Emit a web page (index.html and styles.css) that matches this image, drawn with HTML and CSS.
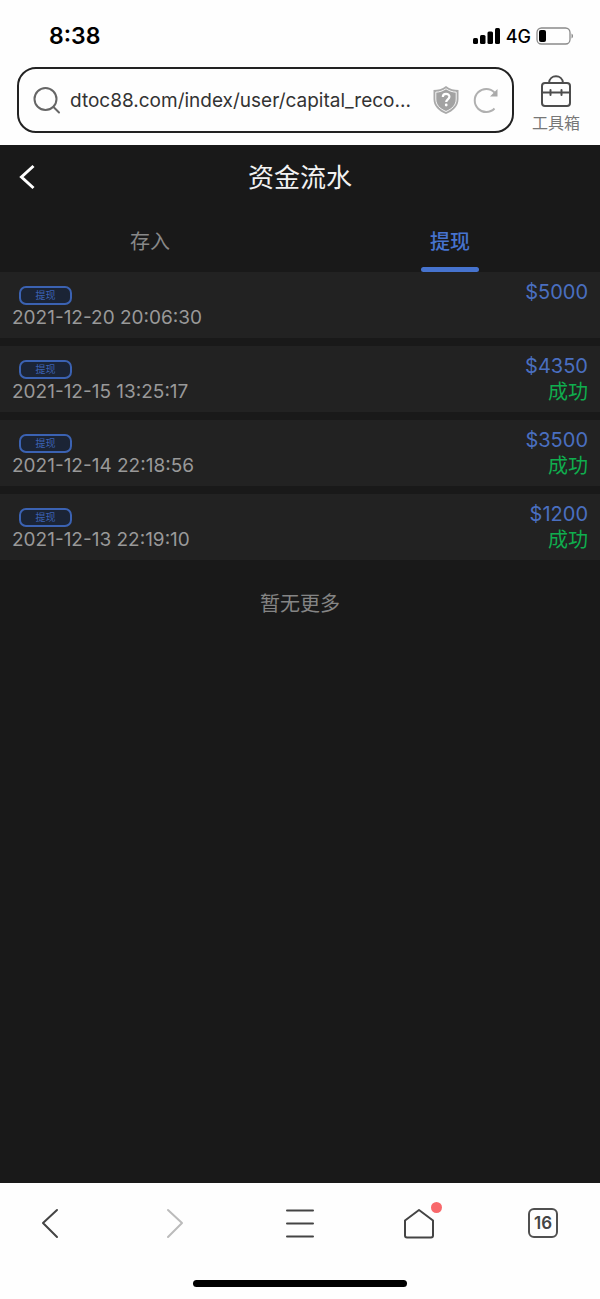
FILE: index.html
```html
<!DOCTYPE html>
<html lang="zh-CN">
<head>
<meta charset="utf-8">
<meta name="viewport" content="width=device-width, initial-scale=1">
<title>资金流水</title>
<link rel="stylesheet" href="styles.css">
</head>
<body>
<header class="browser">
  <div class="status">
    <time class="clock">8:38</time>
    <div class="signal">
      <svg width="28" height="18" viewBox="0 0 28 18" aria-hidden="true"><rect x="0" y="11" width="5" height="6" rx="1.5"/><rect x="7" y="8" width="5.500" height="9" rx="1.500"/><rect x="14.500" y="4.500" width="5.500" height="12.500" rx="1.500"/><rect x="22" y="1" width="5" height="16" rx="1.500"/></svg>
      <span>4G</span>
      <svg width="38" height="20" viewBox="0 0 38 20" fill="none" aria-hidden="true"><rect x="1" y="2" width="33" height="16" rx="4.500" stroke="#8a8a8a" stroke-width="1.300"/><rect x="3" y="4" width="7" height="12" rx="2" fill="#000"/><path d="M35.500 7.500c2 .8 2 4.200 0 5z" fill="#8a8a8a"/></svg>
    </div>
  </div>
  <div class="address-row">
    <form class="address">
      <svg width="28" height="28" viewBox="0 0 28 28" fill="none" stroke="#666" stroke-width="2" stroke-linecap="round" aria-hidden="true"><circle cx="12.500" cy="13" r="11"/><path d="M20.500 21l5.500 5.500"/></svg>
      <input class="url" type="text" aria-label="网址" value="dtoc88.com/index/user/capital_reco...">
      <button class="icon-button" type="button" aria-label="网站安全">
        <svg width="28" height="30" viewBox="0 0 28 30" aria-hidden="true"><path d="M14 1c4 3 8 4 12.500 4v9c0 7-5 12-12.500 15C6.500 26 1.500 21 1.500 14V5C6 5 10 4 14 1z" fill="#aaa"/><path d="M14 3.800c3.500 2.300 6.500 3.200 10.200 3.400V14c0 6-4 9.800-10.200 12.500C7.800 23.800 3.800 20 3.800 14V7.200C7.500 7 10.500 6.100 14 3.800z" fill="#a2a2a2" stroke="#fff" stroke-width=".9"/><path d="M10.800 12c0-4.300 6.600-4.200 6.600-.2 0 2.500-3.200 2.600-3.200 5.200" fill="none" stroke="#fff" stroke-width="2.200"/><circle cx="14.200" cy="20" r="1.400" fill="#fff"/></svg>
      </button>
      <button class="icon-button" type="button" aria-label="刷新">
        <svg width="28" height="28" viewBox="0 0 28 28" fill="none" stroke="#b0b0b0" stroke-width="2" aria-hidden="true"><path d="M22.500 6.500A11.500 11.500 0 1 0 22.500 22.500"/><path d="M25.500 3v7.500h-7.500z" fill="#aaa" stroke="none"/></svg>
      </button>
    </form>
    <button class="toolbox" type="button">
      <svg width="32" height="34" viewBox="0 0 32 34" fill="none" stroke="#4d4d4d" stroke-width="2" stroke-linecap="round" aria-hidden="true"><rect x="2" y="8" width="28" height="23" rx="3"/><path d="M9 8c.5-9 13.500-9 14 0M2 17.500h7M12 17.500h8M23 17.500h7M10.500 15v5M21.500 15v5"/></svg>
      <span>工具箱</span>
    </button>
  </div>
</header>
<main class="page">
  <div class="title-bar">
    <button class="back" type="button" aria-label="返回">
      <svg width="18" height="26" viewBox="0 0 18 26" fill="none" stroke="#fff" stroke-width="3" aria-hidden="true"><path d="M15.500 2L3.500 13l12 11"/></svg>
    </button>
    <h1>资金流水</h1>
  </div>
  <nav class="tabs">
    <button class="tab" type="button">存入</button>
    <button class="tab active" type="button">提现</button>
  </nav>
  <ul class="records">
    <li class="record">
      <div class="info"><span class="tag">提现</span><time>2021-12-20 20:06:30</time></div>
      <div class="result"><span class="amount">$5000</span></div>
    </li>
    <li class="record">
      <div class="info"><span class="tag">提现</span><time>2021-12-15 13:25:17</time></div>
      <div class="result"><span class="amount">$4350</span><span class="success">成功</span></div>
    </li>
    <li class="record">
      <div class="info"><span class="tag">提现</span><time>2021-12-14 22:18:56</time></div>
      <div class="result"><span class="amount">$3500</span><span class="success">成功</span></div>
    </li>
    <li class="record">
      <div class="info"><span class="tag">提现</span><time>2021-12-13 22:19:10</time></div>
      <div class="result"><span class="amount">$1200</span><span class="success">成功</span></div>
    </li>
  </ul>
  <p class="end">暂无更多</p>
</main>
<footer class="bottom">
  <nav class="toolbar">
    <div class="group">
      <button class="tool" type="button" aria-label="后退"><svg width="32" height="32" viewBox="0 0 32 32" aria-hidden="true"><path d="M23 3L9 16l14 14"/></svg></button>
      <button class="tool" type="button" aria-label="前进" disabled><svg width="32" height="32" viewBox="0 0 32 32" aria-hidden="true"><path d="M10 3l14 13-14 14"/></svg></button>
    </div>
    <button class="tool" type="button" aria-label="菜单"><svg width="32" height="32" viewBox="0 0 32 32" aria-hidden="true"><path d="M3 3.500h26M3 16.500h26M3 29.500h26"/></svg></button>
    <div class="group right">
      <button class="tool" type="button" aria-label="主页"><svg width="32" height="32" viewBox="0 0 32 32" aria-hidden="true"><path d="M2 13.500L16 3l14 10.500V28.500q0 2-2 2H4q-2 0-2-2z"/></svg><span class="dot"></span></button>
      <button class="tool" type="button" aria-label="16 个窗口"><span class="count">16</span></button>
    </div>
  </nav>
  <div class="home-indicator"></div>
</footer>
</body>
</html>
```

FILE: styles.css
```css
* { box-sizing: border-box; }
body {
  margin: 0;
  min-height: 100vh;
  display: flex;
  flex-direction: column;
  background: #191919;
  font-family: Inter, "Noto Sans CJK SC", sans-serif;
}
button, input { font: inherit; color: inherit; border: 0; padding: 0; background: none; }
svg { display: block; }

.browser { background: #fefefe; padding: 20px 20px 12px 17px; }
.status {
  display: flex;
  justify-content: space-between;
  align-items: center;
  height: 32px;
  padding: 0 6px 0 32px;
  color: #000;
}
.clock { font-size: 23px; font-weight: 600; }
.signal { display: flex; align-items: center; gap: 5px; font-size: 18px; font-weight: 500; }
.address-row { display: flex; align-items: center; gap: 18px; margin-top: 15px; }
.address {
  flex: 1;
  min-width: 0;
  display: flex;
  align-items: center;
  gap: 12px;
  height: 66px;
  padding: 0 12px 0 14px;
  border: 2px solid #222;
  border-radius: 19px;
}
.url { flex: 1; min-width: 0; margin-left: -3px; font-size: 19px; color: #333; outline: 0; text-overflow: ellipsis; }
.toolbox { display: flex; flex-direction: column; align-items: center; gap: 4px; padding-top: 8px; font-size: 16px; line-height: 20px; color: #777; }

.page { flex: 1; background: #191919; color: #999; }
.title-bar { display: grid; grid-template-columns: 1fr auto 1fr; align-items: center; height: 64px; padding: 0 18px; }
.back { justify-self: start; }
.title-bar h1 { margin: 0; padding-bottom: 4px; font-size: 26px; font-weight: 400; color: #f2f2f2; }
.tabs { display: grid; grid-template-columns: 1fr 1fr; height: 63px; }
.tab { position: relative; font-size: 20px; color: #888; }
.tab.active { color: #4673ce; font-weight: 500; }
.tab.active::after {
  content: "";
  position: absolute;
  left: 50%;
  bottom: 0;
  width: 58px;
  height: 5px;
  margin-left: -29px;
  border-radius: 3px;
  background: #4673ce;
}

.records { display: flex; flex-direction: column; gap: 8px; margin: 0; padding: 0; list-style: none; }
.record { display: flex; justify-content: space-between; min-height: 66px; padding: 7px 12px; background: #222; }
.info { display: flex; flex-direction: column; align-items: flex-start; gap: 1px; padding-top: 7px; font-size: 19px; line-height: 24px; }
.tag {
  width: 53px;
  height: 19px;
  margin-left: 7px;
  border: 2px solid #3b62b2;
  border-radius: 7px;
  background: #1b2435;
  color: #3b62b2;
  font-size: 10px;
  line-height: 15px;
  text-align: center;
}
.result { display: flex; flex-direction: column; align-items: flex-end; font-size: 20px; line-height: 26px; }
.amount { color: #4a6fc0; }
.success { color: #0fae4e; }
.end { margin: 29px 0; font-size: 20px; line-height: 30px; text-align: center; color: #858585; }

.bottom { display: flex; flex-direction: column; align-items: center; background: #fefefe; padding: 24px 0 12px; }
.toolbar { display: grid; grid-template-columns: 1fr auto 1fr; align-self: stretch; padding: 0 34px; }
.group { display: flex; gap: 92px; }
.group.right { justify-content: flex-end; padding-right: 7px; }
.tool { position: relative; width: 32px; height: 32px; color: #444; }
.tool svg { fill: none; stroke: currentColor; stroke-width: 2; stroke-linecap: round; stroke-linejoin: round; }
.tool:disabled { color: #bbb; }
.dot { position: absolute; top: -5px; right: -7px; width: 11px; height: 11px; border-radius: 50%; background: #f8686b; }
.count {
  display: block;
  width: 30px;
  height: 30px;
  margin: 0 auto;
  border: 2px solid #505050;
  border-radius: 6px;
  font-size: 17px;
  font-weight: 600;
  line-height: 26px;
}
.home-indicator { width: 214px; height: 7px; margin-top: 41px; border-radius: 4px; background: #000; }
```
